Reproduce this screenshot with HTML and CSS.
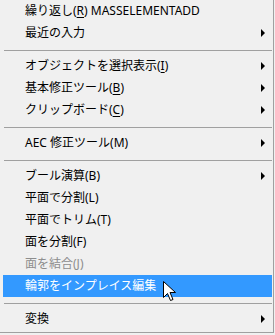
FILE: index.html
```html
<!DOCTYPE html>
<html lang="ja">
<head>
  <meta charset="UTF-8">
  <title>コンテキストメニュー</title>
  <link rel="stylesheet" href="styles.css">
</head>
<body>
  <div class="menu">
    <div class="item">繰り返し(<u>R</u>) MASSELEMENTADD</div>
    <div class="item sub">最近の入力</div>
    <div class="sep"></div>
    <div class="item sub">オブジェクトを選択表示(<u>I</u>)</div>
    <div class="item sub">基本修正ツール(<u>B</u>)</div>
    <div class="item sub">クリップボード(<u>C</u>)</div>
    <div class="sep"></div>
    <div class="item sub">AEC 修正ツール(M)</div>
    <div class="sep"></div>
    <div class="item sub">ブール演算(B)</div>
    <div class="item">平面で分割(L)</div>
    <div class="item">平面でトリム(T)</div>
    <div class="item">面を分割(F)</div>
    <div class="item disabled">面を結合(J)</div>
    <div class="item active">輪郭をインプレイス編集
      <svg class="cursor" width="14" height="22" viewBox="0 0 14 22">
        <path d="M0.5 0.5 L0.5 16.5 L4.5 12.5 L7.5 19.5 L10 18.5 L7 11.5 L12.5 11.5 Z" fill="#fff" stroke="#000" stroke-width="1"/>
      </svg>
    </div>
    <div class="sep"></div>
    <div class="item sub">変換</div>
  </div>
</body>
</html>
```

FILE: styles.css
```css
body {
  margin: 0;
  background-color: #f0f0f0;
  font-family: "Noto Sans", "Noto Sans CJK JP", sans-serif;
  font-size: 12px;
  color: #000;
}

.menu {
  width: 269px;
  height: 332px;
  padding: 0 1px 0 3px;
  border-right: 1px solid #a0a0a0;
  border-bottom: 1px solid #a0a0a0;
  background-color: #f0f0f0;
}

.item {
  position: relative;
  height: 22px;
  line-height: 22px;
  padding-left: 22px;
  white-space: nowrap;
}

.item u {
  text-decoration: underline;
  text-underline-offset: 2px;
}

.sub::after {
  content: "";
  position: absolute;
  right: 7px;
  top: 7px;
  border-top: 4px solid transparent;
  border-bottom: 4px solid transparent;
  border-left: 4px solid #000;
}

.sep {
  height: 1px;
  margin: 6px 0 4px 1px;
  background-color: #a0a0a0;
}

.disabled {
  color: #8d8d8d;
}

.active {
  background-color: #3399ff;
  color: #fff;
}

.cursor {
  position: absolute;
  left: 160px;
  top: 6px;
}
```
